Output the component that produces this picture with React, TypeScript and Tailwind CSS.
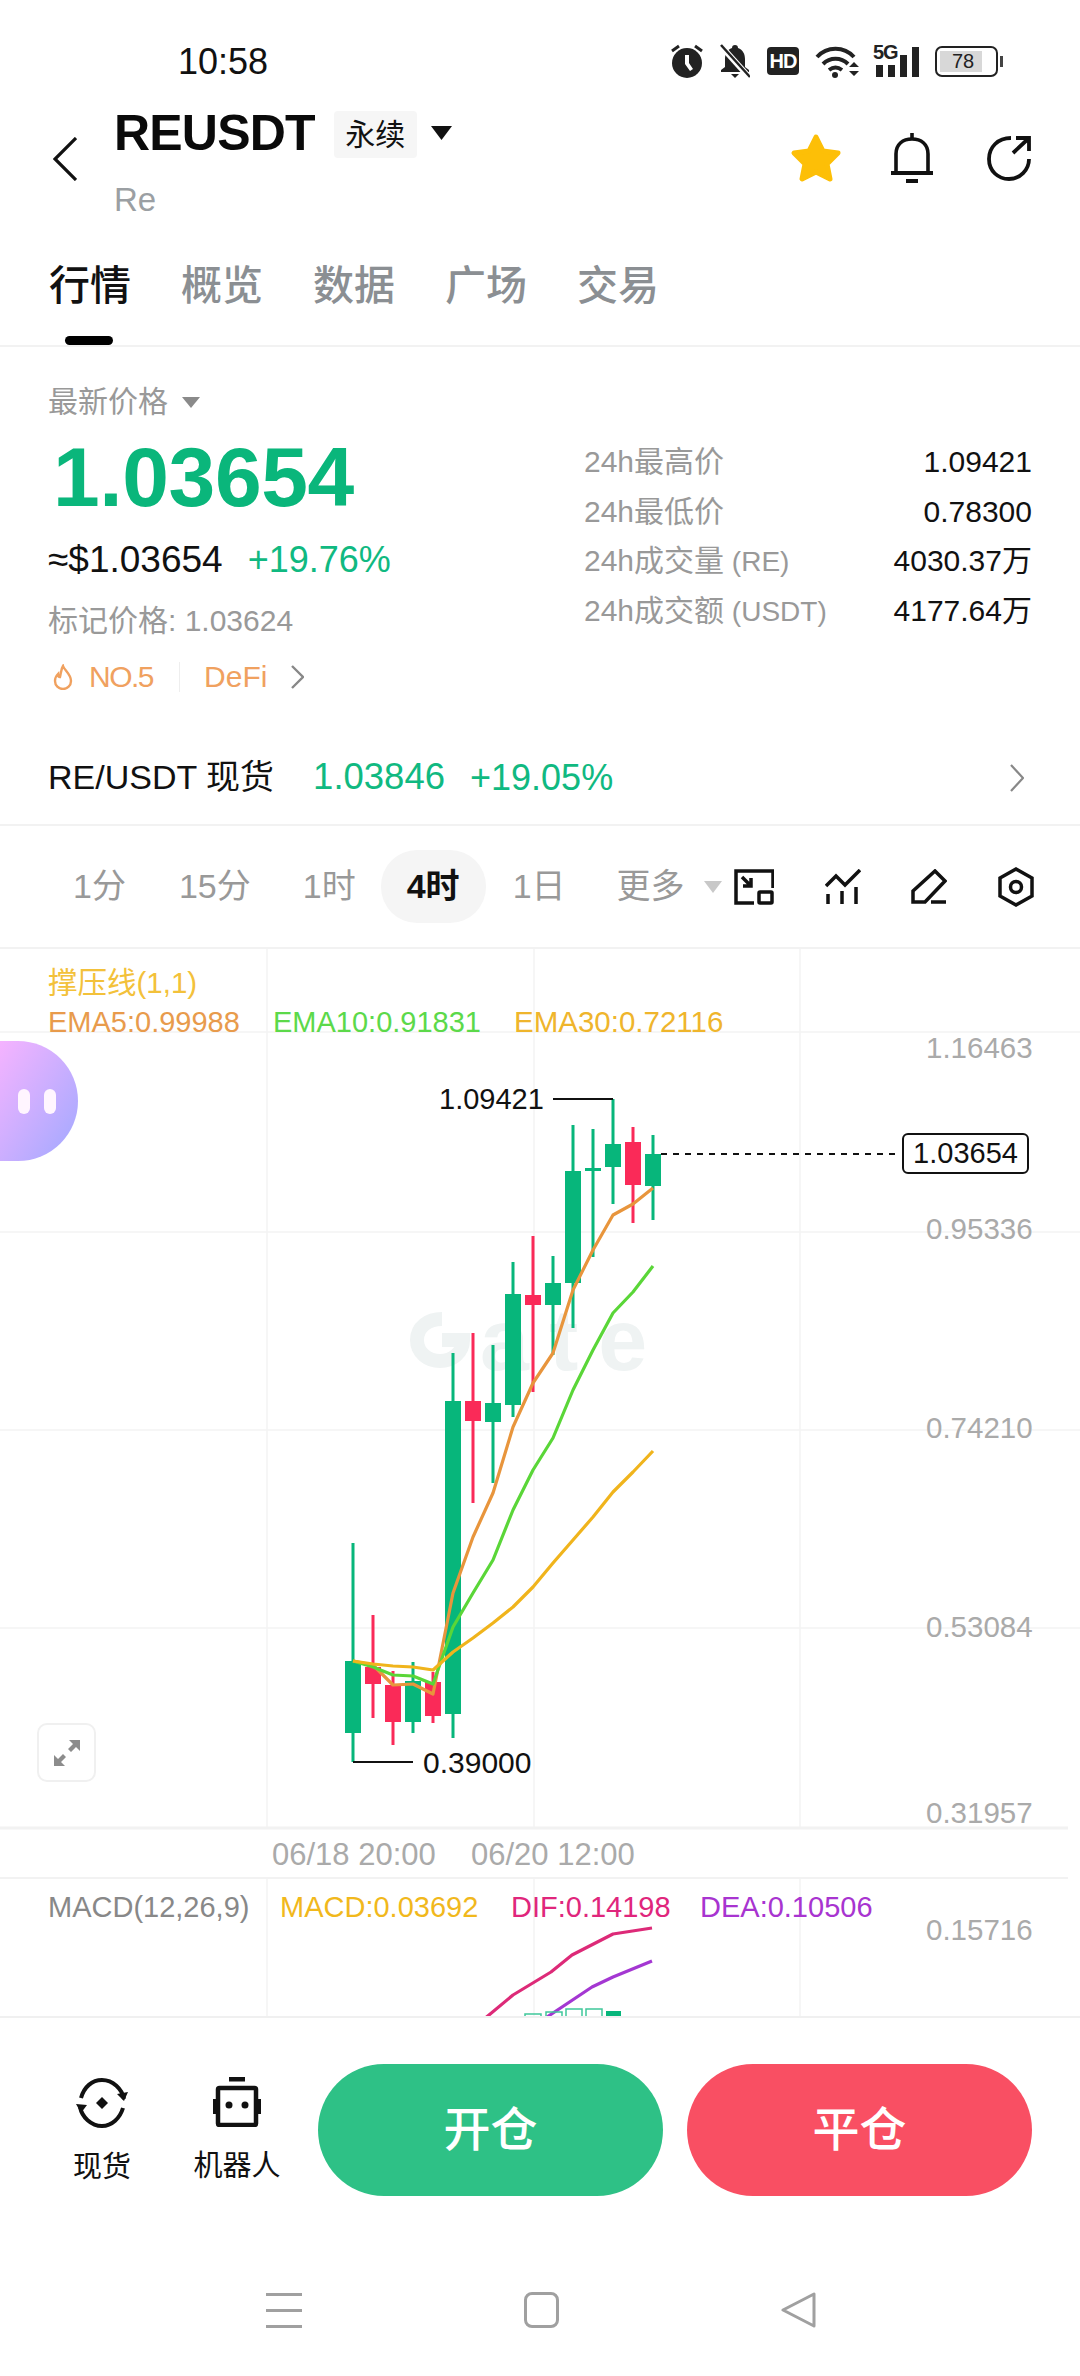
const GREEN = "#07b67b";
const RED = "#fa2a58";

// x, wick top, wick bottom, body top, body bottom
const candles: [number, number, number, number, number, string][] = [
  [353, 1543, 1762, 1661, 1733, GREEN],
  [373, 1615, 1718, 1667, 1684, RED],
  [393, 1671, 1745, 1685, 1722, RED],
  [413, 1662, 1733, 1681, 1722, GREEN],
  [433, 1672, 1723, 1682, 1716, RED],
  [453, 1353, 1738, 1401, 1714, GREEN],
  [473, 1333, 1503, 1401, 1421, RED],
  [493, 1345, 1483, 1403, 1422, GREEN],
  [513, 1262, 1417, 1294, 1405, GREEN],
  [533, 1236, 1392, 1295, 1305, RED],
  [553, 1256, 1355, 1283, 1305, GREEN],
  [573, 1125, 1328, 1171, 1283, GREEN],
  [593, 1129, 1257, 1168, 1171, GREEN],
  [613, 1099, 1204, 1144, 1167, GREEN],
  [633, 1127, 1223, 1142, 1185, RED],
  [653, 1135, 1220, 1154, 1186, GREEN],
];

const CHART_TOP = 949;
const line = (pts: number[][]) => pts.map(([x, y]) => `${x},${y - CHART_TOP}`).join(" ");

const ema5 = [[353, 1661], [373, 1665], [393, 1685], [413, 1684], [433, 1694], [453, 1593], [473, 1537], [493, 1493], [513, 1427], [533, 1383], [553, 1353], [573, 1290], [593, 1250], [613, 1215], [633, 1204], [653, 1188]];
const ema10 = [[353, 1661], [373, 1667], [393, 1675], [413, 1676], [433, 1684], [453, 1627], [473, 1593], [493, 1560], [513, 1510], [533, 1470], [553, 1438], [573, 1390], [593, 1350], [613, 1313], [633, 1292], [653, 1266]];
const ema30 = [[353, 1661], [373, 1664], [393, 1666], [413, 1667], [433, 1670], [453, 1652], [473, 1638], [493, 1623], [513, 1607], [533, 1587], [553, 1563], [573, 1540], [593, 1517], [613, 1492], [633, 1472], [653, 1451]];
const dif = [[478, 2024], [489, 2015], [513, 1995], [551, 1972], [572, 1955], [613, 1934], [652, 1928]];
const dea = [[541, 2024], [547, 2017], [592, 1987], [613, 1977], [652, 1961]];

const stats = [
  ["24h最高价", "", "1.09421"],
  ["24h最低价", "", "0.78300"],
  ["24h成交量", " (RE)", "4030.37万"],
  ["24h成交额", " (USDT)", "4177.64万"],
];

const tabs = ["概览", "数据", "广场", "交易"];

const StatusIcons = () => (
  <div className="flex items-center">
    <svg width="32" height="34" viewBox="0 0 32 34" fill="#222" className="mr-[17px]">
      <circle cx="16" cy="19" r="15" />
      <path d="M1 7 8 2M31 7l-7-5" stroke="#222" strokeWidth="3" />
      <path d="M14 11h4v8l4 6-3 2-5-7z" fill="#fff" />
    </svg>
    <svg width="30" height="34" viewBox="0 0 30 34" fill="#222" className="mr-[17px]">
      <path d="M15 1c2 0 3 1 3 3 5 2 7 6 7 11v8l4 3v2H1v-2l4-3v-8c0-5 2-9 7-11 0-2 1-3 3-3z" />
      <path d="M11 30h8l-4 4z" />
      <path d="M1 2 29 33" stroke="#fff" strokeWidth="6" />
      <path d="M1 1 30 33" stroke="#222" strokeWidth="2.5" />
    </svg>
    <div className="mr-[16px] flex h-[28px] w-[32px] items-center justify-center rounded-[4px] bg-[#222] text-[20px] font-bold tracking-[-1px] text-white">
      HD
    </div>
    <svg width="44" height="33" viewBox="0 0 44 33" fill="none" stroke="#222" strokeWidth="4" className="mr-[14px]">
      <path d="M2 12C12 1 29 1 39 12M8 19c7-7 18-7 25 0M14 25c4-3 9-3 13 0" />
      <circle cx="20" cy="30" r="3" fill="#222" stroke="none" />
      <path d="m34 22 5-5 5 5zM34 26l5 5 5-5z" fill="#222" stroke="none" />
    </svg>
    <div className="relative mr-[16px] h-[32px] w-[46px]">
      <span className="absolute left-0 top-[-3px] text-[20px] font-bold leading-[20px] tracking-[-1px] text-[#222]">5G</span>
      <div className="absolute bottom-0 left-[3px] h-[12px] w-[7px] bg-[#222]" />
      <div className="absolute bottom-0 left-[15px] h-[12px] w-[7px] bg-[#222]" />
      <div className="absolute bottom-0 left-[27px] h-[22px] w-[7px] bg-[#222]" />
      <div className="absolute bottom-0 left-[39px] h-[30px] w-[7px] bg-[#222]" />
    </div>
    <div className="flex items-center">
      <div className="flex h-[31px] w-[63px] items-center rounded-[7px] border-2 border-[#222] p-[3px]">
        <div className="flex h-[21px] w-[42px] items-center justify-center bg-[#d8d8d8] pl-[4px] text-[20px] leading-none text-[#222]">78</div>
      </div>
      <div className="ml-[2px] h-[11px] w-[3px] bg-[#444]" />
    </div>
  </div>
);

const Header = () => (
  <div className="flex h-[160px] items-start pl-[53px] pr-[48px]">
    <svg width="24" height="44" viewBox="0 0 24 44" fill="none" stroke="#111" strokeWidth="3.200" className="mt-[47px] shrink-0">
      <path d="M23 1 2 22l21 21" />
    </svg>
    <div className="ml-[37px] flex flex-col">
      <div className="flex items-center pt-[16px]">
        <span className="text-[50px] font-bold leading-[54px] tracking-[-0.8px] text-[#0a0a0a]">REUSDT</span>
        <span className="ml-[19px] mt-[2px] flex h-[47px] w-[83px] items-center justify-center rounded-[4px] bg-[#f6f6f6] text-[30px] text-[#111]">永续</span>
        <svg width="21" height="14" viewBox="0 0 21 14" className="ml-[14px]">
          <path d="M0 0h21L10.500 14z" fill="#111" />
        </svg>
      </div>
      <span className="mt-[20px] text-[33px] leading-[40px] text-[#9b9fa3]">Re</span>
    </div>
    <div className="ml-auto mt-[42px] flex items-center">
      <svg width="52" height="50" viewBox="0 0 52 50">
        <path d="M26 4 33 18 48 20 37 31 40 46 26 39 12 46 15 31 4 20 19 18z" fill="#fdbf07" stroke="#fdbf07" strokeWidth="5" strokeLinejoin="round" />
      </svg>
      <svg width="44" height="52" viewBox="0 0 44 52" fill="none" stroke="#111" strokeWidth="3.600" className="ml-[48px]">
        <path d="M22 1v6" />
        <path d="M6 41V22C6 12 13 7 22 7s16 5 16 15v19" />
        <path d="M1 41h42" strokeWidth="4" />
        <path d="M16 49h12" strokeWidth="4" />
      </svg>
      <svg width="46" height="46" viewBox="0 0 46 46" fill="none" stroke="#111" strokeWidth="3.800" className="ml-[52px]">
        <path d="M25 3C12 3 3 12 3 24s9 20 20 20 20-9 20-20" />
        <path d="M27 18 42 4M30 3h13v13" />
      </svg>
    </div>
  </div>
);

const Tabs = () => (
  <div className="relative flex h-[97px] items-start border-b-2 border-[#f2f2f2] pl-[49px] pt-[7px]">
    <span className="text-[41px] font-medium leading-[58px] text-[#111]">行情</span>
    {tabs.map((t) => (
      <span key={t} className="ml-[50px] text-[41px] font-medium leading-[58px] text-[#8b8f93]">{t}</span>
    ))}
    <div className="absolute bottom-0 left-[65px] h-[9px] w-[48px] rounded-full bg-black" />
  </div>
);

const PriceBlock = () => (
  <div className="flex h-[390px] pl-[48px] pr-[48px]">
    <div className="w-[536px] shrink-0">
      <div className="flex h-[84px] items-start pt-[26px]">
        <span className="text-[30px] leading-[58px] text-[#999]">最新价格</span>
        <svg width="18" height="11" viewBox="0 0 18 11" className="ml-[14px] mt-[24px]">
          <path d="M0 0h18L9 11z" fill="#8a8a8a" />
        </svg>
      </div>
      <div className="mt-[5px] pl-[5px] text-[84px] font-bold leading-[82px] tracking-[-0.4px] text-[#0ab67b]">1.03654</div>
      <div className="mt-[19px] flex items-center leading-[46px]">
        <span className="text-[37px] text-[#111]">≈$1.03654</span>
        <span className="ml-[25px] text-[36px] text-[#10b981]">+19.76%</span>
      </div>
      <div className="mt-[16px] text-[30px] leading-[44px] text-[#999]">标记价格: 1.03624</div>
      <div className="mt-[16px] flex items-center text-[30px] leading-[36px] text-[#f0a15f]">
        <svg width="22" height="26" viewBox="0 0 22 26" fill="none" stroke="#f0a15f" strokeWidth="2.400" className="ml-[4px]">
          <path d="M11 2c1 4 8 8 8 15a8 8 0 0 1-16 0c0-3 1-5 3-7 0 2 1 3 2 3 1-4 1-8 3-11z" />
        </svg>
        <span className="ml-[15px] font-medium tracking-[-1.5px]">NO.5</span>
        <div className="ml-[26px] h-[30px] w-px bg-[#eee]" />
        <span className="ml-[24px] font-medium">DeFi</span>
        <svg width="13" height="24" viewBox="0 0 13 24" fill="none" stroke="#888" strokeWidth="2.400" className="ml-[24px]">
          <path d="M1 1 12 12 1 23" />
        </svg>
      </div>
    </div>
    <div className="flex flex-1 flex-col pt-[90px]">
      {stats.map(([k, suffix, v]) => (
        <div key={k} className="flex h-[49.500px] items-center justify-between text-[30px]">
          <span className="text-[#999]">
            {k}
            <span className="text-[28px]">{suffix}</span>
          </span>
          <span className="text-[#111]">{v}</span>
        </div>
      ))}
    </div>
  </div>
);

const TimeRow = () => (
  <div className="flex h-[123px] items-center border-b-[2px] border-[#f2f2f2] text-[34px] text-[#999]">
    <span className="ml-[73px]">1分</span>
    <span className="ml-[53px]">15分</span>
    <span className="ml-[52px]">1时</span>
    <span className="ml-[25px] flex h-[73px] w-[105px] items-center justify-center rounded-[36px] bg-[#f5f5f5] font-semibold text-[#111]">4时</span>
    <span className="ml-[27px]">1日</span>
    <span className="ml-[51px] w-[70px]">更多</span>
    <svg width="18" height="12" viewBox="0 0 18 12" className="ml-[17px]">
      <path d="M0 0h18L9 12z" fill="#c8c8c8" />
    </svg>
    <svg width="40" height="36" viewBox="0 0 40 36" fill="none" stroke="#111" strokeWidth="3.500" className="ml-[12px]">
      <path d="M20 34H2V2h37v17" />
      <path d="M8 8l9 9M17 9v8H9" />
      <rect x="25" y="23" width="13" height="11" rx="1" />
    </svg>
    <svg width="36" height="36" viewBox="0 0 36 36" fill="none" stroke="#111" strokeWidth="3.500" className="ml-[51px]">
      <path d="M1 17 11 7l9 9L35 1" />
      <path d="M3 25v10M17 22v13M31 18v17" />
    </svg>
    <svg width="36" height="36" viewBox="0 0 36 36" fill="none" stroke="#111" strokeWidth="3.500" className="ml-[50px]">
      <path d="M2 33V22L24 2l10 10-20 21H2zM20 33h15" />
    </svg>
    <svg width="36" height="40" viewBox="0 0 36 40" fill="none" stroke="#111" strokeWidth="3.500" className="ml-[51px]">
      <path d="M18 2 34 11v18l-16 9-16-9V11z" />
      <circle cx="18" cy="20" r="5.500" />
    </svg>
  </div>
);

const Label = ({ x, y, children, color = "text-[#aaa]", size = "text-[29px]" }: { x: number; y: number; children: string; color?: string; size?: string }) => (
  <span className={`absolute whitespace-nowrap leading-[36px] ${size} ${color}`} style={{ left: x, top: y - CHART_TOP - 18 }}>
    {children}
  </span>
);

const Chart = () => (
  <div className="relative h-[1069px] overflow-hidden border-b-[2px] border-[#f0f0f0]">
    {/* watermark sits behind the candles */}
    <div className="absolute left-[410px] top-[362px] flex items-center">
      <svg width="60" height="56" viewBox="0 0 60 56" fill="none" stroke="#eff3f3" strokeWidth="14">
        <path d="M32 7C18 7 7 15 7 28s11 21 23 21 23-8 23-21H32" />
      </svg>
      <span className="ml-[10px] text-[88px] font-bold leading-[58px] tracking-[20px] text-[#eff3f3]">ate</span>
    </div>

    <svg width="1080" height="1069" viewBox="0 0 1080 1069" className="absolute left-0 top-0">
      <g stroke="#f4f4f4" strokeWidth="1.500">
        <path d="M267 0V879M534 0V879M800 0V879" />
        <path d="M267 929V1069M534 929V1069M800 929V1069" />
        <path d="M0 83H1080M0 283H1080M0 481H1080M0 679H1080" />
      </g>
      <path d="M0 879H1068" stroke="#f2f2f2" strokeWidth="3" />
      <path d="M0 929H1068" stroke="#f2f2f2" strokeWidth="2" />

      {candles.map(([x, wt, wb, bt, bb, c]) => (
        <g key={x} fill={c}>
          <rect x={x - 1.5} y={wt - CHART_TOP} width="3" height={wb - wt} />
          <rect x={x - 8} y={bt - CHART_TOP} width="16" height={bb - bt} />
        </g>
      ))}

      <g fill="none" strokeWidth="3.200" strokeLinejoin="round">
        <polyline points={line(ema5)} stroke="#e8953c" />
        <polyline points={line(ema10)} stroke="#5ad638" />
        <polyline points={line(ema30)} stroke="#f0b41c" />
        <polyline points={line(dif)} stroke="#dd2a78" />
        <polyline points={line(dea)} stroke="#a437d2" />
      </g>

      <g fill="none" stroke="#3fc79a" strokeWidth="1.500">
        <rect x="525" y={2014 - CHART_TOP} width="16" height="20" />
        <rect x="546" y={2012 - CHART_TOP} width="16" height="20" />
        <rect x="566" y={2009 - CHART_TOP} width="16" height="20" />
        <rect x="586" y={2009 - CHART_TOP} width="16" height="20" />
      </g>
      <rect x="606" y={2011 - CHART_TOP} width="15" height="20" fill={GREEN} />

      <path d={`M553 ${1099 - CHART_TOP}H613`} stroke="#111" strokeWidth="2" />
      <path d={`M353 ${1762 - CHART_TOP}H413`} stroke="#111" strokeWidth="2" />
      <path d={`M661 ${1154 - CHART_TOP}H900`} stroke="#111" strokeWidth="2" strokeDasharray="6 6" />
    </svg>

    <span className="absolute left-[48px] top-[16px] text-[29.500px] leading-[36px] text-[#f3c13a]">撑压线(1,1)</span>
    <Label x={48} y={1022} color="text-[#e89b4c]">EMA5:0.99988</Label>
    <Label x={273} y={1022} color="text-[#5cd94a]">EMA10:0.91831</Label>
    <Label x={514} y={1022} color="text-[#efb52c]" size="text-[29.500px]">EMA30:0.72116</Label>

    <Label x={926} y={1048} size="text-[29.500px]">1.16463</Label>
    <Label x={926} y={1229} size="text-[29.500px]">0.95336</Label>
    <Label x={926} y={1428} size="text-[29.500px]">0.74210</Label>
    <Label x={926} y={1627} size="text-[29.500px]">0.53084</Label>
    <Label x={926} y={1813} size="text-[29.500px]">0.31957</Label>
    <Label x={926} y={1930} size="text-[29.500px]">0.15716</Label>

    <Label x={439} y={1099} color="text-[#111]">1.09421</Label>
    <Label x={423} y={1763} color="text-[#111]" size="text-[30px]">0.39000</Label>

    <div className="absolute left-[902px] top-[184px] flex h-[41px] w-[127px] items-center justify-center rounded-[6px] border-2 border-[#111] bg-white text-[29px] text-[#111]">
      1.03654
    </div>

    <div className="absolute left-0 top-[92px] flex h-[120px] w-[78px] items-center rounded-r-[60px] bg-gradient-to-br from-[#f5b3ff] to-[#9fa8ff] pl-[18px]">
      <div className="h-[25px] w-[12px] rounded-full bg-[#fff5ff]" />
      <div className="ml-[14px] h-[25px] w-[12px] rounded-full bg-[#fff5ff]" />
    </div>

    <div className="absolute left-[37px] top-[774px] flex h-[59px] w-[59px] items-center justify-center rounded-[10px] border-2 border-[#f0f0f0] bg-white">
      <svg width="30" height="30" viewBox="0 0 30 30" fill="#8c8c8c">
        <path d="M17 2h11v11l-4-4-5 5-3-3 5-5zM13 28H2V17l4 4 5-5 3 3-5 5z" />
      </svg>
    </div>

    <Label x={272} y={1855} size="text-[31px]">06/18 20:00</Label>
    <Label x={471} y={1855} size="text-[31px]">06/20 12:00</Label>

    <Label x={48} y={1907} color="text-[#888]">MACD(12,26,9)</Label>
    <Label x={280} y={1907} color="text-[#f1b81c]">MACD:0.03692</Label>
    <Label x={511} y={1907} color="text-[#e0267c]">DIF:0.14198</Label>
    <Label x={700} y={1907} color="text-[#a834d0]">DEA:0.10506</Label>
  </div>
);

const BottomBar = () => (
  <div className="flex h-[358px] flex-col">
    <div className="flex items-start pt-[46px]">
      <div className="ml-[72px] flex w-[60px] flex-col items-center pt-[13px]">
        <svg width="52" height="52" viewBox="0 0 52 52" fill="none" stroke="#111" strokeWidth="4">
          <path d="M5 21C8 10 16 3 26 3c11 0 20 9 22 19" />
          <path d="M47 31c-3 10-11 18-21 18C15 49 6 40 4 30" />
          <path d="m41 17 7 7 4-9zM0 27l11 1-6 8z" fill="#111" stroke="none" />
          <path d="m26 20 6 6-6 6-6-6z" fill="#111" stroke="none" />
        </svg>
        <span className="mt-[18px] whitespace-nowrap text-[29px] leading-[40px] text-[#111]">现货</span>
      </div>
      <div className="ml-[60px] flex w-[90px] flex-col items-center pt-[13px]">
        <svg width="50" height="50" viewBox="0 0 50 50" fill="none" stroke="#111" strokeWidth="4.500">
          <path d="M17 2h16" strokeWidth="5" />
          <rect x="6" y="11" width="38" height="37" rx="1.500" />
          <path d="M1 22v15h5V22zM49 22v15h-5V22z" fill="#111" stroke="none" />
          <circle cx="17" cy="28" r="3.500" fill="#111" stroke="none" />
          <circle cx="33" cy="28" r="3.500" fill="#111" stroke="none" />
        </svg>
        <span className="mt-[19px] whitespace-nowrap text-[29px] leading-[40px] text-[#111]">机器人</span>
      </div>
      <button className="ml-[36px] flex h-[132px] w-[345px] items-center justify-center rounded-full bg-[#2ec186] text-[47px] font-medium text-white">开仓</button>
      <button className="ml-[24px] flex h-[132px] w-[345px] items-center justify-center rounded-full bg-[#f94f63] text-[47px] font-medium text-white">平仓</button>
    </div>
    <div className="mt-[96px] flex h-[36px] items-center">
      <div className="ml-[266px] flex h-[35px] w-[36px] flex-col justify-between">
        <div className="h-[3px] bg-[#a0a0a0]" />
        <div className="h-[3px] bg-[#a0a0a0]" />
        <div className="h-[3px] bg-[#a0a0a0]" />
      </div>
      <div className="ml-[222px] h-[36px] w-[35px] rounded-[8px] border-[3px] border-[#a0a0a0]" />
      <svg width="36" height="36" viewBox="0 0 36 36" fill="none" stroke="#a0a0a0" strokeWidth="3" strokeLinejoin="round" className="ml-[222px]">
        <path d="M33 2v32L2 18z" />
      </svg>
    </div>
  </div>
);

export default function App() {
  return (
    <div
      className="flex h-[2376px] w-[1080px] flex-col overflow-hidden bg-white"
      style={{ fontFamily: '"Liberation Sans", "Noto Sans CJK SC", sans-serif' }}
    >
      <div className="flex h-[90px] items-start justify-between pl-[178px] pr-[77px] pt-[44px]">
        <span className="text-[36px] font-medium leading-[36px] text-[#111]">10:58</span>
        <StatusIcons />
      </div>
      <Header />
      <Tabs />
      <PriceBlock />
      <div className="flex h-[89px] items-center border-b-[2px] border-[#f2f2f2] pb-[6px] pl-[48px] pr-[50px]">
        <span className="text-[34px] text-[#111]">RE/USDT 现货</span>
        <span className="ml-[39px] text-[36.500px] text-[#10b981]">1.03846</span>
        <span className="ml-[25px] text-[36px] text-[#10b981]">+19.05%</span>
        <svg width="14" height="28" viewBox="0 0 14 28" fill="none" stroke="#888" strokeWidth="2.200" className="ml-auto mr-[6px]">
          <path d="M1 1 13 14 1 27" />
        </svg>
      </div>
      <TimeRow />
      <Chart />
      <BottomBar />
    </div>
  );
}
